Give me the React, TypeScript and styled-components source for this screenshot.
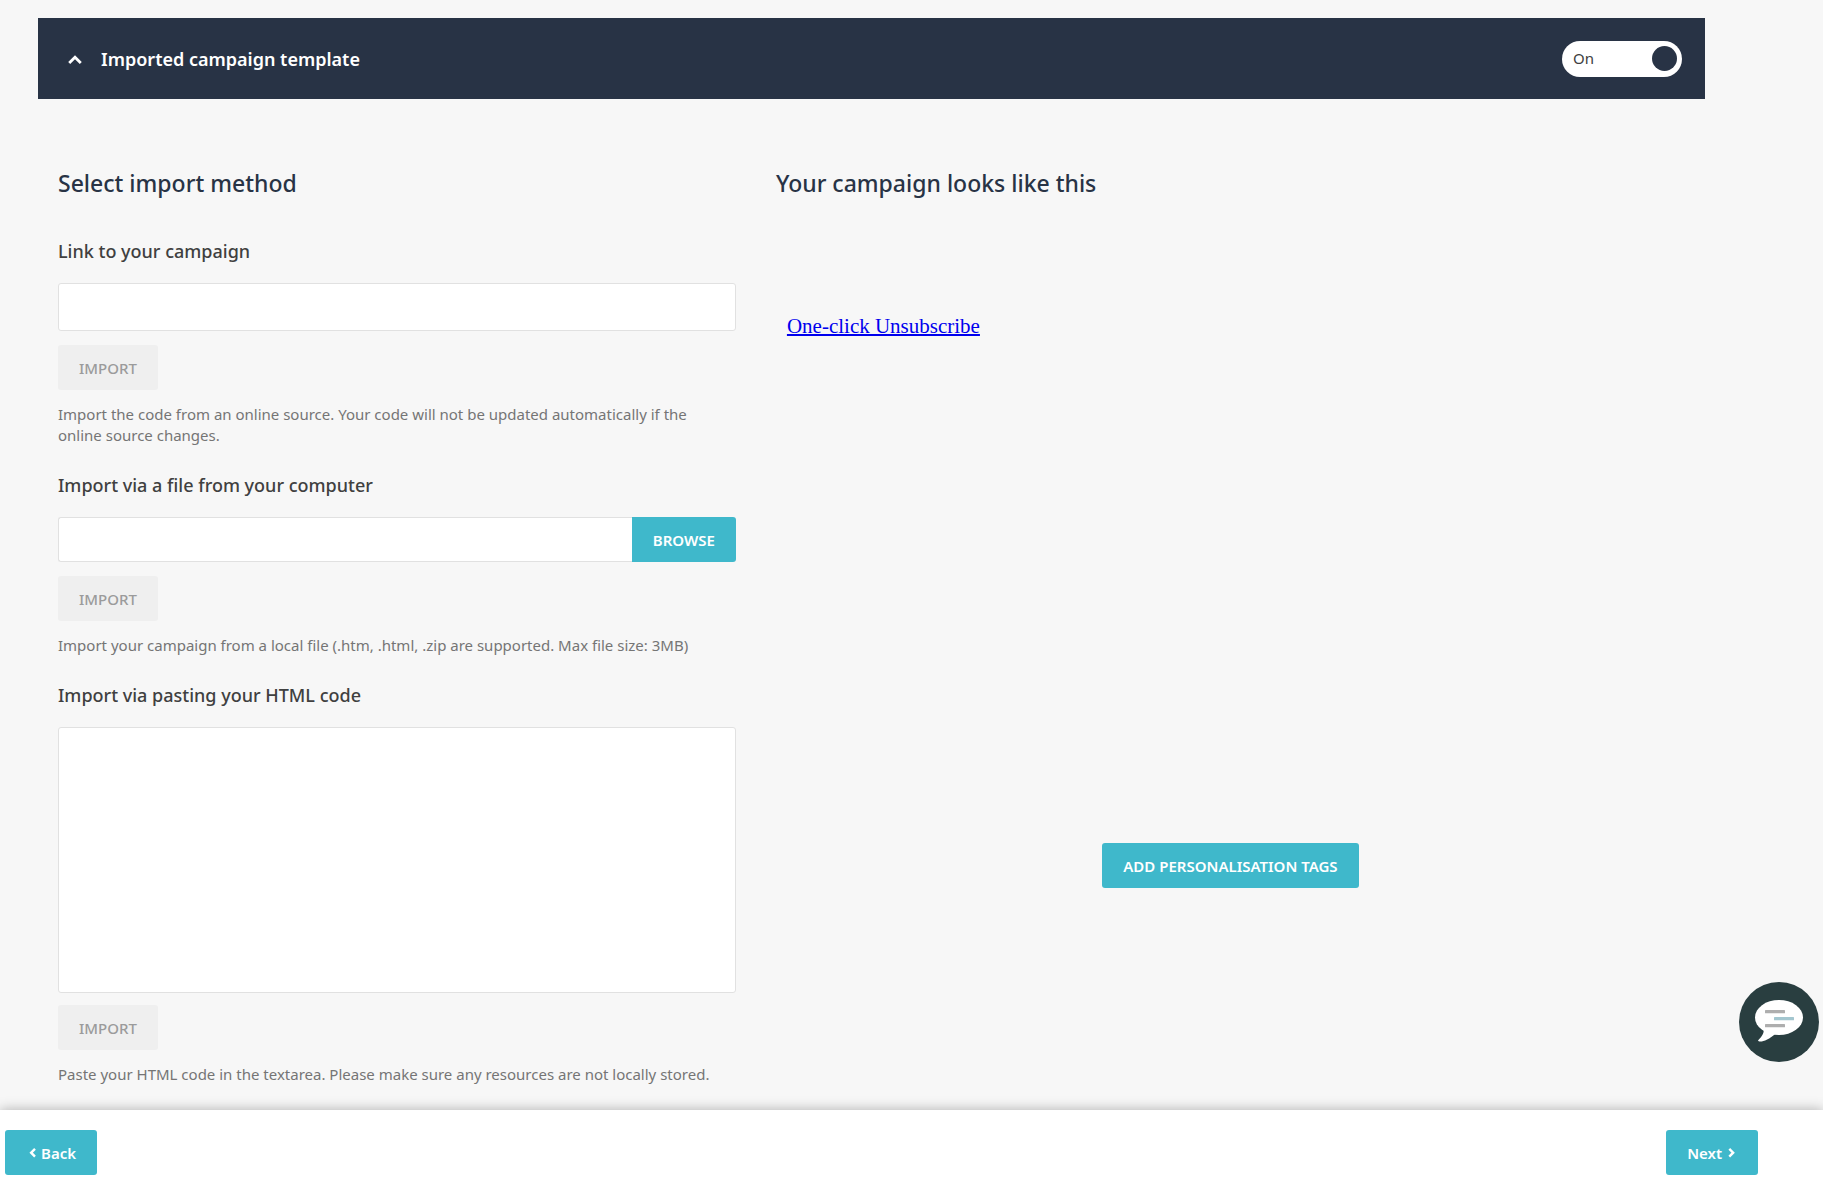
import React, { useState } from "react";
import styled, { createGlobalStyle } from "styled-components";

const color = {
  page: "#f7f7f7",
  navy: "#283345",
  teal: "#3fb8cb",
  text: "#404040",
  muted: "#757575",
  border: "#e1e1e1",
};

const GlobalStyle = createGlobalStyle`
  *, *::before, *::after { box-sizing: border-box; }
  body {
    margin: 0;
    background: ${color.page};
    color: ${color.text};
    font-family: "Noto Sans", "Open Sans", sans-serif;
    font-size: 15px;
    line-height: 21px;
  }
  h1, h2, p { margin: 0; }
  button, input, textarea { font: inherit; }
`;

const Page = styled.div`
  display: flex;
  flex-direction: column;
  min-height: 100vh;
  padding-top: 18px;
`;

const Main = styled.main`
  flex: 1;
  margin: 0 118px 0 38px;
`;

const Banner = styled.header`
  display: flex;
  align-items: center;
  justify-content: space-between;
  padding: 22px 23px;
  background: ${color.navy};
`;

const BannerTitle = styled.h1`
  color: #fff;
  font-size: 18px;
  line-height: 35px;
  font-weight: 600;
`;

const Collapse = styled.button`
  display: flex;
  align-items: center;
  gap: 19px;
  padding: 2px 0 0 7px;
  border: 0;
  background: none;
  color: inherit;
  font-weight: inherit;
  cursor: pointer;
`;

const Switch = styled.label`
  display: flex;
  align-items: center;
  justify-content: space-between;
  width: 120px;
  height: 36px;
  padding: 0 5px 0 11px;
  border-radius: 18px;
  background: #fff;
  cursor: pointer;
`;

const SwitchKnob = styled.input`
  appearance: none;
  width: 25px;
  height: 25px;
  margin: 0;
  border-radius: 50%;
  background: ${color.navy};
  cursor: pointer;
`;

const Columns = styled.div`
  display: grid;
  grid-template-columns: 5fr 7fr;
  padding: 68px 20px 25px;
`;

const ImportColumn = styled.section`
  display: flex;
  flex-direction: column;
  gap: 27px;
  min-width: 0;
`;

const PreviewColumn = styled.section`
  display: flex;
  flex-direction: column;
  align-items: center;
  min-width: 0;
  padding-left: 40px;
`;

const SectionTitle = styled.h2`
  align-self: stretch;
  color: ${color.navy};
  font-size: 23px;
  line-height: 32px;
  font-weight: 500;
`;

const ImportForm = styled.form<{ $first?: boolean }>`
  display: flex;
  flex-direction: column;
  align-items: flex-start;
  gap: 14px;
  margin-top: ${(p) => (p.$first ? "13px" : "0")};
`;

const FieldLabel = styled.label`
  margin-bottom: 6px;
  font-size: 18px;
  line-height: 24px;
  font-weight: 500;
`;

const TextField = styled.input`
  width: 100%;
  height: 48px;
  padding: 0 12px;
  border: 1px solid ${color.border};
  border-radius: 3px;
  background: #fff;
`;

const FileRow = styled.div`
  display: flex;
  width: 100%;
`;

const FileField = styled(TextField)`
  flex: 1;
  min-width: 0;
  height: 45px;
  border-right: 0;
  border-radius: 3px 0 0 3px;
`;

const CodeField = styled.textarea`
  display: block;
  width: 100%;
  height: 266px;
  margin-bottom: -2px;
  padding: 12px;
  border: 1px solid ${color.border};
  border-radius: 3px;
  background: #fff;
  resize: none;
`;

const Button = styled.button<{ $joined?: boolean }>`
  display: inline-flex;
  align-items: center;
  justify-content: center;
  gap: 3px;
  height: 45px;
  padding: 2px 21px 0;
  border: 0;
  border-radius: ${(p) => (p.$joined ? "0 3px 3px 0" : "3px")};
  background: ${color.teal};
  color: #fff;
  font-weight: 600;
  white-space: nowrap;
  cursor: pointer;

  &:disabled {
    background: #efefef;
    color: #9b9b9b;
    font-weight: 500;
    cursor: default;
  }
`;

const Help = styled.p`
  padding-right: 20px;
  color: ${color.muted};
`;

const Preview = styled.div`
  align-self: stretch;
  height: 644px;
  padding: 114px 11px 0;
  font-family: "Liberation Serif", "Times New Roman", serif;
  font-size: 21px;
  line-height: 26px;
`;

const PreviewLink = styled.a`
  color: #0000ee;
  text-decoration: underline;
  text-decoration-thickness: 2px;
`;

const Footer = styled.footer`
  position: relative;
  display: flex;
  align-items: flex-start;
  justify-content: space-between;
  height: 71px;
  padding: 20px 65px 0 5px;
  background: #fff;
  box-shadow: 0 0 12px rgba(0, 0, 0, 0.3);
`;

const ChatButton = styled.button`
  position: fixed;
  right: 4px;
  bottom: 119px;
  width: 80px;
  height: 80px;
  padding: 0;
  border: 0;
  border-radius: 50%;
  background: #293e40;
  cursor: pointer;
`;

function Chevron({ direction, size }: { direction: "up" | "left" | "right"; size: number }) {
  const paths = {
    up: "M1.2 10 7 4.200l5.800 5.800",
    left: "M10.5 1 6 5.500 10.5 10",
    right: "M5 1 9.5 5.500 5 10",
  };
  return (
    <svg width={size} height={size} viewBox="0 0 14 14" fill="none" stroke="currentColor" strokeWidth="2.8" aria-hidden="true">
      <path d={paths[direction]} />
    </svg>
  );
}

function ChatIcon() {
  return (
    <svg width="80" height="80" viewBox="0 0 80 80" aria-hidden="true">
      <ellipse cx="40" cy="35.5" rx="24" ry="17.5" fill="#fff" />
      <path d="M24 46c2 4-.5 8-5 12.500 1 2.500 10 .5 17.500-7z" fill="#fff" />
      <rect x="26" y="28" width="20" height="3.3" rx="0.6" fill="#aeaeae" />
      <rect x="35" y="35" width="20" height="3.3" rx="0.6" fill="#a3c6cf" />
      <rect x="26" y="42" width="20" height="3.3" rx="0.6" fill="#aeaeae" />
    </svg>
  );
}

export default function App() {
  const [enabled, setEnabled] = useState(true);

  return (
    <>
      <GlobalStyle />
      <Page>
        <Main>
          <Banner>
            <BannerTitle>
              <Collapse type="button" aria-expanded="true">
                <Chevron direction="up" size={14} />
                Imported campaign template
              </Collapse>
            </BannerTitle>
            <Switch>
              {enabled ? "On" : "Off"}
              <SwitchKnob type="checkbox" role="switch" checked={enabled} onChange={(e) => setEnabled(e.target.checked)} />
            </Switch>
          </Banner>

          <Columns>
            <ImportColumn>
              <SectionTitle>Select import method</SectionTitle>

              <ImportForm $first>
                <FieldLabel htmlFor="campaign-link">Link to your campaign</FieldLabel>
                <TextField id="campaign-link" type="url" />
                <Button type="submit" disabled>IMPORT</Button>
                <Help>
                  Import the code from an online source. Your code will not be updated automatically if the online source changes.
                </Help>
              </ImportForm>

              <ImportForm>
                <FieldLabel htmlFor="campaign-file">Import via a file from your computer</FieldLabel>
                <FileRow>
                  <FileField id="campaign-file" type="text" readOnly />
                  <Button type="button" $joined>BROWSE</Button>
                </FileRow>
                <Button type="submit" disabled>IMPORT</Button>
                <Help>Import your campaign from a local file (.htm, .html, .zip are supported. Max file size: 3MB)</Help>
              </ImportForm>

              <ImportForm>
                <FieldLabel htmlFor="campaign-code">Import via pasting your HTML code</FieldLabel>
                <CodeField id="campaign-code" />
                <Button type="submit" disabled>IMPORT</Button>
                <Help>Paste your HTML code in the textarea. Please make sure any resources are not locally stored.</Help>
              </ImportForm>
            </ImportColumn>

            <PreviewColumn>
              <SectionTitle>Your campaign looks like this</SectionTitle>
              <Preview>
                <PreviewLink href="#unsubscribe">One-click Unsubscribe</PreviewLink>
              </Preview>
              <Button type="button">ADD PERSONALISATION TAGS</Button>
            </PreviewColumn>
          </Columns>
        </Main>

        <Footer>
          <Button type="button">
            <Chevron direction="left" size={12} />
            Back
          </Button>
          <Button type="button">
            Next
            <Chevron direction="right" size={12} />
          </Button>
        </Footer>
      </Page>
      <ChatButton type="button" aria-label="Open chat">
        <ChatIcon />
      </ChatButton>
    </>
  );
}
